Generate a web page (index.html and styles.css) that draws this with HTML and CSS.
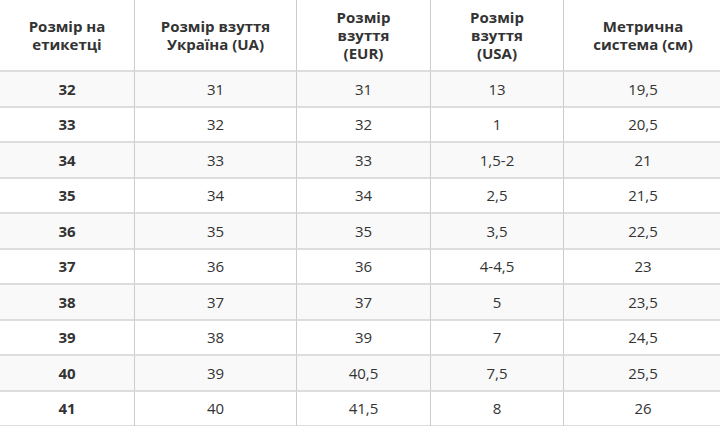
FILE: index.html
```html
<!DOCTYPE html>
<html lang="uk">
<head>
<meta charset="utf-8">
<title>Таблиця розмірів</title>
<link rel="stylesheet" href="styles.css">
</head>
<body>
<table class="size-table">
  <thead>
    <tr>
      <th class="c1">Розмір на<br>етикетці</th>
      <th class="c2">Розмір взуття<br>Україна (UA)</th>
      <th class="c3">Розмір<br>взуття<br>(EUR)</th>
      <th class="c4">Розмір<br>взуття<br>(USA)</th>
      <th class="c5">Метрична<br>система (см)</th>
    </tr>
  </thead>
  <tbody>
    <tr><td class="label">32</td><td>31</td><td>31</td><td>13</td><td>19,5</td></tr>
    <tr><td class="label">33</td><td>32</td><td>32</td><td>1</td><td>20,5</td></tr>
    <tr><td class="label">34</td><td>33</td><td>33</td><td>1,5-2</td><td>21</td></tr>
    <tr><td class="label">35</td><td>34</td><td>34</td><td>2,5</td><td>21,5</td></tr>
    <tr><td class="label">36</td><td>35</td><td>35</td><td>3,5</td><td>22,5</td></tr>
    <tr><td class="label">37</td><td>36</td><td>36</td><td>4-4,5</td><td>23</td></tr>
    <tr><td class="label">38</td><td>37</td><td>37</td><td>5</td><td>23,5</td></tr>
    <tr><td class="label">39</td><td>38</td><td>39</td><td>7</td><td>24,5</td></tr>
    <tr><td class="label">40</td><td>39</td><td>40,5</td><td>7,5</td><td>25,5</td></tr>
    <tr><td class="label">41</td><td>40</td><td>41,5</td><td>8</td><td>26</td></tr>
  </tbody>
</table>
</body>
</html>
```
FILE: styles.css
```css
html, body {
  margin: 0;
  padding: 0;
  background: #ffffff;
}
body {
  overflow: hidden;
  font-family: "Open Sans", "Liberation Sans", sans-serif;
  color: #333333;
}
.size-table {
  width: 722px;
  table-layout: fixed;
  border-collapse: separate;
  border-spacing: 0;
}
.size-table th,
.size-table td {
  box-sizing: border-box;
  text-align: center;
  vertical-align: middle;
  border-bottom: 2px solid #dddddd;
  border-right: 1px solid #cccccc;
  padding: 0 8px;
}
.size-table th:last-child,
.size-table td:last-child {
  border-right: none;
}
.size-table th {
  height: 72px;
  font-size: 15px;
  line-height: 18px;
  font-weight: 700;
  color: #333333;
}
.size-table td {
  height: 35.5px;
  font-size: 15px;
  line-height: 20px;
  font-weight: 400;
}
.size-table .c1 { width: 135px; }
.size-table .c2 { width: 162px; }
.size-table .c3 { width: 134px; }
.size-table .c4 { width: 133px; }
.size-table tbody tr:nth-child(odd) td {
  background: #f9f9f9;
}
.size-table td.label {
  font-weight: 700;
}
```
